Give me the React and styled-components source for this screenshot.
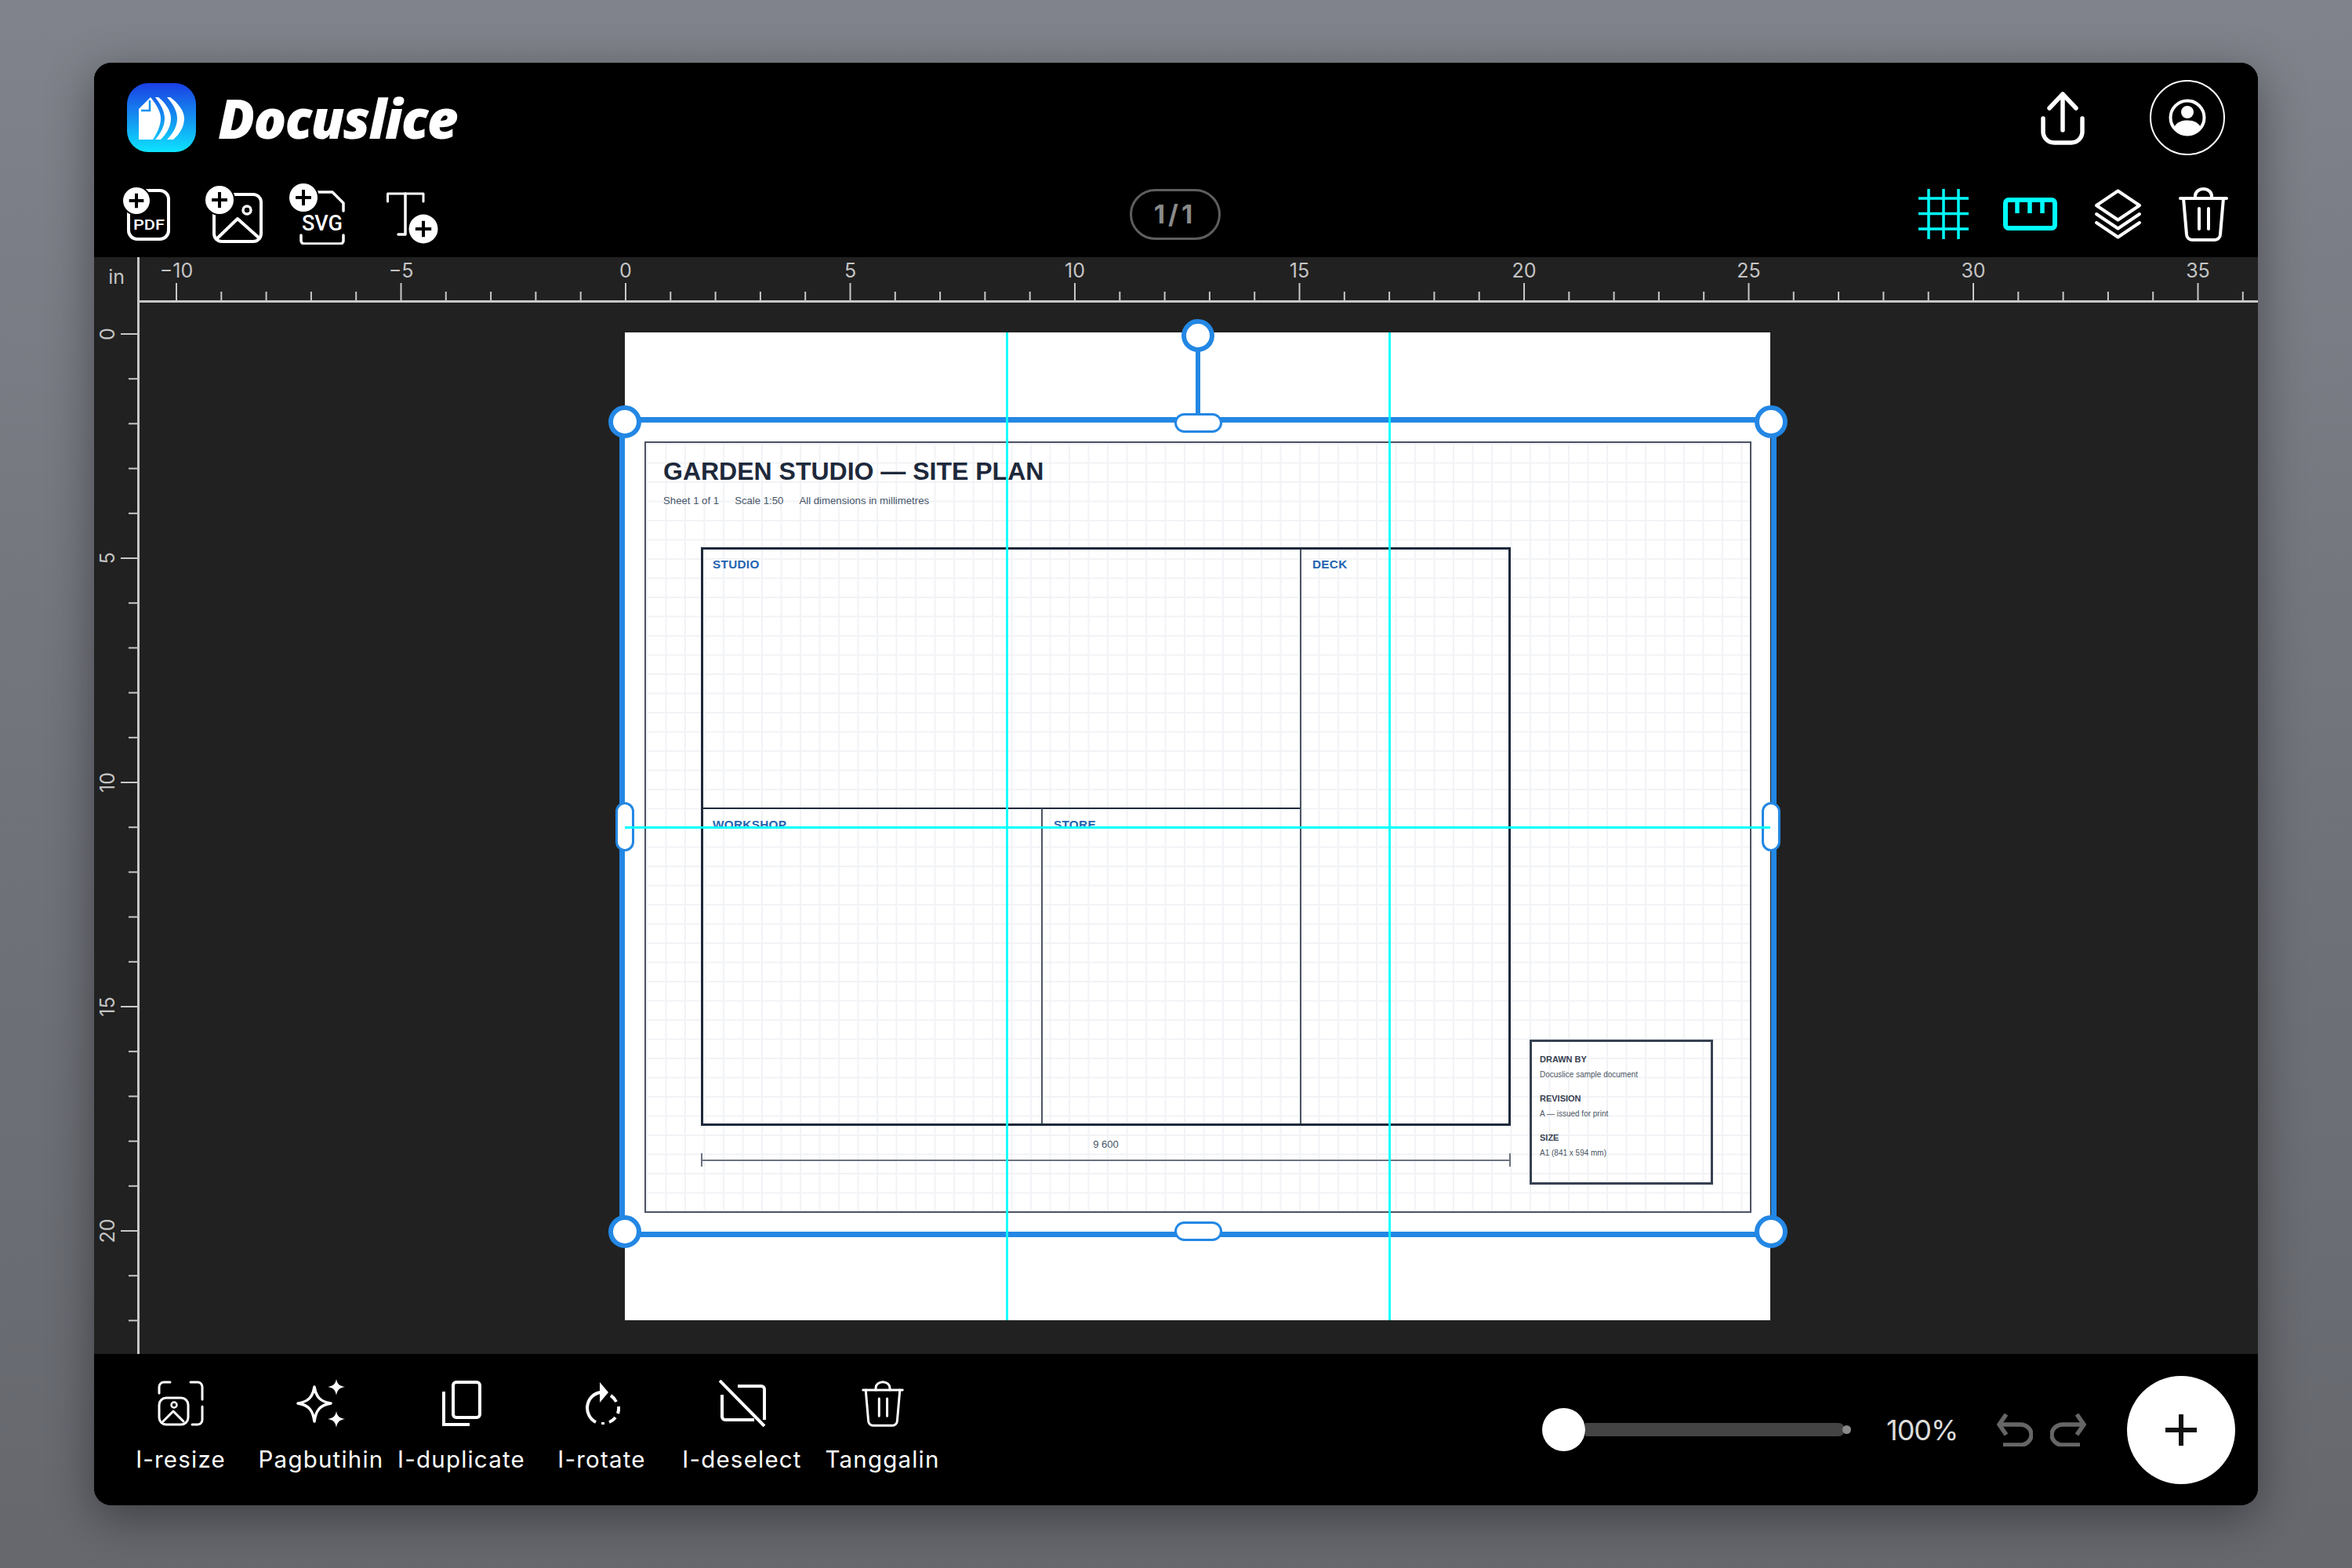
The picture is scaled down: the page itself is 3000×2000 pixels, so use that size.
import React from "react";
import styled, { createGlobalStyle } from "styled-components";

const GlobalStyle = createGlobalStyle`
  html, body {
    margin: 0;
    padding: 0;
    background: #64666e;
  }
  * {
    box-sizing: border-box;
  }
`;

const UI_FONT = `Inter, "Liberation Sans", sans-serif`;
const DOC_FONT = `"Liberation Sans", Arial, sans-serif`;
const CYAN = "#00ffff";
const BLUE = "#2387e4";
const UNIT = 57.3;

const Stage = styled.div`
  width: 3000px;
  height: 2000px;
  padding: 80px 120px;
  background: linear-gradient(180deg, #80838b 0%, #71737b 50%, #66686e 100%);
  font-family: ${UI_FONT};
`;

const Shell = styled.div`
  width: 2760px;
  height: 1840px;
  display: flex;
  flex-direction: column;
  border-radius: 22px;
  overflow: hidden;
  background: #000;
  box-shadow: 0 16px 60px rgba(0, 0, 0, 0.4);
`;

const TopBar = styled.header`
  height: 248px;
  flex: none;
  background: #000;
  padding-top: 22px;
`;

const BrandRow = styled.div`
  height: 96px;
  display: flex;
  align-items: center;
  padding: 0 42px;
`;

const Brand = styled.span`
  margin-left: 28px;
  font-family: "Open Sans", sans-serif;
  font-weight: 800;
  font-style: italic;
  font-size: 69px;
  line-height: 96px;
  letter-spacing: -1.8px;
  color: #fff;
`;

const BrandActions = styled.div`
  margin-left: auto;
  display: flex;
  align-items: center;
  gap: 83px;
`;

const Avatar = styled.div`
  width: 96px;
  height: 96px;
  border-radius: 50%;
  border: 2px solid #fff;
  display: flex;
  align-items: center;
  justify-content: center;
`;

const ToolRow = styled.div`
  height: 68px;
  margin-top: 41px;
  padding: 0 38px 0 37px;
  display: grid;
  grid-template-columns: 1fr auto 1fr;
  grid-template-rows: 68px;
  align-items: center;
`;

const AddTools = styled.div`
  display: flex;
  align-items: center;
`;

const AddSlot = styled.div`
  width: ${(p) => p.$w}px;
  display: flex;
  margin-top: ${(p) => p.$top || 0}px;
`;

const PageBadge = styled.div`
  width: 116px;
  height: 65px;
  margin-left: -2px;
  border: 3px solid #5e5e5e;
  border-radius: 33px;
  display: flex;
  align-items: center;
  justify-content: center;
  color: #8a8a8a;
  font-size: 33px;
  font-weight: 700;
  letter-spacing: 4px;
`;

const ViewTools = styled.div`
  justify-self: end;
  display: flex;
  align-items: center;
  gap: 47px;
`;

const GridSlot = styled.div`
  display: flex;
  margin-right: -3px;
`;

const Workspace = styled.main`
  flex: 1;
  min-height: 0;
  display: grid;
  grid-template-columns: 58px 1fr;
  grid-template-rows: 58px 1fr;
  background: #212121;
`;

const RulerCorner = styled.div`
  border-right: 3px solid #c8c8c8;
  color: #c4c4c4;
  font-size: 25px;
  line-height: 50px;
  text-align: right;
  padding-right: 16px;
`;

const TopRuler = styled.div`
  overflow: hidden;
  svg {
    display: block;
  }
`;

const SideRuler = styled.div`
  border-right: 3px solid #c8c8c8;
  overflow: hidden;
  svg {
    display: block;
  }
`;

const Canvas = styled.div`
  position: relative;
  overflow: hidden;
`;

const Sheet = styled.div`
  position: absolute;
  left: 619px;
  top: 38px;
  width: 1461px;
  height: 1260px;
  padding: 139px 24px 0 25px;
  background: #fff;
  font-family: ${DOC_FONT};
`;

const Frame = styled.div`
  height: 984px;
  border: 2px solid #4b5262;
  padding: 19px 0 0 22px;
  background-color: #fff;
  background-image: linear-gradient(#f1f3f6 1.5px, transparent 1.5px),
    linear-gradient(90deg, #f1f3f6 1.5px, transparent 1.5px);
  background-size: 24.5px 24.5px;
`;

const DocTitle = styled.h1`
  margin: 0;
  font-size: 32px;
  line-height: 34px;
  font-weight: 700;
  color: #1e293b;
`;

const DocMeta = styled.div`
  margin-top: 14px;
  display: flex;
  gap: 20px;
  font-size: 13.2px;
  line-height: 14px;
  color: #475569;
`;

const SheetBody = styled.div`
  margin-top: 52px;
  display: flex;
  align-items: flex-end;
`;

const PlanColumn = styled.div`
  margin-left: 48px;
  width: 1033px;
  padding-bottom: 23px;
`;

const Plan = styled.div`
  height: 738px;
  border: 3px solid #1e293b;
  display: grid;
  grid-template-columns: 431px 330px 1fr;
  grid-template-rows: 329px 1fr;
`;

const Room = styled.div`
  grid-column: ${(p) => p.$col};
  grid-row: ${(p) => p.$row};
  padding: ${(p) => (p.$top ? 12 : 11)}px 0 0 ${(p) => (p.$left ? 14 : 12)}px;
  border-left: ${(p) => (p.$left ? "2px solid #4b5563" : "none")};
  border-top: ${(p) => (p.$top ? "2px solid #1e293b" : "none")};
`;

const RoomLabel = styled.span`
  display: block;
  font-size: 15.3px;
  line-height: 16px;
  font-weight: 700;
  letter-spacing: 0.3px;
  color: #2563b0;
`;

const DimText = styled.div`
  margin-top: 17px;
  font-size: 13px;
  line-height: 14px;
  text-align: center;
  color: #475569;
`;

const DimLine = styled.div`
  margin-top: 4px;
  height: 17px;
  border-left: 2px solid #6b7280;
  border-right: 2px solid #6b7280;
  background: linear-gradient(#6b7280, #6b7280) center / 100% 2px no-repeat;
`;

const InfoBox = styled.div`
  margin-left: 24px;
  width: 234px;
  height: 185px;
  border: 3px solid #374151;
  padding: 15px 0 0 10px;
`;

const InfoHead = styled.div`
  font-size: 11px;
  line-height: 14px;
  font-weight: 700;
  color: #374151;
  margin-bottom: 6px;
`;

const InfoValue = styled.div`
  font-size: 10px;
  line-height: 14px;
  color: #4b5563;
  margin-bottom: 16px;
`;

const Selection = styled.div`
  position: absolute;
  left: -7px;
  top: 108px;
  width: 1476px;
  height: 1046px;
  border: 7px solid ${BLUE};
`;

const Corner = styled.span`
  position: absolute;
  width: 42px;
  height: 42px;
  border-radius: 50%;
  border: 6px solid ${BLUE};
  background: #fff;
  ${(p) => (p.$v === "top" ? "top: -22px;" : "bottom: -21px;")}
  ${(p) => (p.$h === "left" ? "left: -21px;" : "right: -21px;")}
`;

const RotateKnob = styled.span`
  position: absolute;
  left: 50%;
  top: -132px;
  margin-left: -21px;
  width: 42px;
  height: 42px;
  border-radius: 50%;
  border: 6px solid ${BLUE};
  background: #fff;
`;

const RotateStem = styled.span`
  position: absolute;
  left: 50%;
  top: -92px;
  margin-left: -3px;
  width: 6px;
  height: 84px;
  background: ${BLUE};
`;

const HPill = styled.span`
  position: absolute;
  left: 50%;
  margin-left: -30px;
  width: 61px;
  height: 25px;
  border-radius: 13px;
  border: 3px solid ${BLUE};
  background: #fff;
  ${(p) => (p.$side === "top" ? "top: -12px;" : "bottom: -12px;")}
`;

const VPill = styled.span`
  position: absolute;
  top: 50%;
  margin-top: -32px;
  width: 24px;
  height: 63px;
  border-radius: 13px;
  border: 3px solid ${BLUE};
  background: #fff;
  ${(p) => (p.$side === "left" ? "left: -12px;" : "right: -12px;")}
`;

const VGuide = styled.span`
  position: absolute;
  top: 0;
  bottom: 0;
  left: ${(p) => p.$at}px;
  width: 3px;
  background: ${CYAN};
  opacity: 0.9;
`;

const HGuide = styled.span`
  position: absolute;
  left: 0;
  right: 0;
  top: ${(p) => p.$at}px;
  height: 3px;
  background: ${CYAN};
`;

const BottomBar = styled.footer`
  height: 193px;
  flex: none;
  display: flex;
  align-items: center;
  padding: 0 29px 0 21px;
  background: #000;
`;

const ActionItem = styled.button`
  width: 179px;
  height: 125px;
  padding: 0;
  border: none;
  background: none;
  align-self: flex-start;
  margin-top: 32px;
  display: flex;
  flex-direction: column;
  align-items: center;
  color: #fff;
  font-family: ${UI_FONT};
`;

const ActionIcon = styled.span`
  height: 62px;
  display: flex;
  align-items: center;
`;

const ActionLabel = styled.span`
  margin-top: 22px;
  font-size: 29.5px;
  line-height: 36px;
  letter-spacing: 1.2px;
  white-space: nowrap;
`;

const BarEnd = styled.div`
  margin-left: auto;
  display: flex;
  align-items: center;
`;

const ZoomSlider = styled.div`
  display: flex;
  align-items: center;
`;

const ZoomThumb = styled.span`
  width: 55px;
  height: 55px;
  border-radius: 50%;
  background: #fff;
`;

const ZoomTrack = styled.span`
  width: 331px;
  height: 17px;
  border-radius: 0 8px 8px 0;
  background: #444;
`;

const ZoomDot = styled.span`
  width: 11px;
  height: 11px;
  margin-left: -3px;
  border-radius: 50%;
  background: #8a8a8a;
`;

const ZoomValue = styled.span`
  width: 89px;
  margin: 0 52px 0 45px;
  color: #dcdcdc;
  font-size: 36px;
  letter-spacing: -1px;
  white-space: nowrap;
`;

const History = styled.div`
  display: flex;
  align-items: center;
  gap: 22px;
`;

const AddButton = styled.button`
  width: 138px;
  height: 138px;
  margin-left: 52px;
  padding: 0;
  border: none;
  border-radius: 50%;
  background: #fff;
  display: flex;
  align-items: center;
  justify-content: center;
`;

const Svg = ({ w, h, children, ...rest }) => (
  <svg width={w} height={h} viewBox={`0 0 ${w} ${h}`} fill="none" {...rest}>
    {children}
  </svg>
);

const line = { stroke: "#fff", strokeLinecap: "round", strokeLinejoin: "round" };

const PlusBadge = ({ cx, cy, r }) => (
  <g>
    <circle cx={cx} cy={cy} r={r + 2} fill="#000" />
    <circle cx={cx} cy={cy} r={r} fill="#fff" />
    <path d={`M${cx - r * 0.55} ${cy}H${cx + r * 0.55}M${cx} ${cy - r * 0.55}V${cy + r * 0.55}`} stroke="#000" strokeWidth="4" />
  </g>
);

const LogoMark = () => (
  <Svg w={88} h={88}>
    <defs>
      <linearGradient id="logoFill" x1="0" y1="0" x2="0" y2="1">
        <stop offset="0" stopColor="#1a3fe4" />
        <stop offset="0.5" stopColor="#1490f0" />
        <stop offset="1" stopColor="#0de4ff" />
      </linearGradient>
    </defs>
    <rect width="88" height="88" rx="27" fill="url(#logoFill)" />
    <path d="M30 18 C38 28 43 37 43 45 C43 55 38 64 33 72 H15 V33 Z" fill="#fff" />
    <path d="M29 22 V35 H18" stroke="#1490f0" strokeWidth="2.5" />
    <path d="M36 18 H40 C50 26 56 36 56 45 C56 56 50 65 43 72 H36 C43 64 48 55 48 45 C48 36 43 27 36 18 Z" fill="#fff" />
    <path d="M51 18 H55 C66 26 73 36 73 45 C73 56 67 65 59 72 H51 C59 64 64 55 64 45 C64 36 59 27 51 18 Z" fill="#fff" />
  </Svg>
);

const PdfIcon = () => (
  <Svg w={60} h={68}>
    <rect x="7" y="4" width="51" height="62" rx="11" {...line} strokeWidth="4" />
    <PlusBadge cx={17} cy={17} r={17} />
    <text x="13" y="54" fill="#fff" fontFamily="Roboto, sans-serif" fontWeight="500" fontSize="19" textLength="40" lengthAdjust="spacingAndGlyphs">PDF</text>
  </Svg>
);

const ImageAddIcon = () => (
  <Svg w={73} h={73}>
    <rect x="11" y="11" width="60" height="60" rx="10" {...line} strokeWidth="4" />
    <circle cx="53" cy="31" r="5" {...line} strokeWidth="3.5" />
    <path d="M14 68 L41 42 L69 67" {...line} strokeWidth="4" />
    <PlusBadge cx={18} cy={18} r={18} />
  </Svg>
);

const SvgAddIcon = () => (
  <Svg w={71} h={78}>
    <path d="M36 11 H55 L69 25 V35" {...line} strokeWidth="3.5" />
    <path d="M15 66 V73 a4 4 0 0 0 4 4 H65 a4 4 0 0 0 4 -4 V66" {...line} strokeWidth="3.5" />
    <PlusBadge cx={18} cy={18} r={18} />
    <text x="16" y="60" fill="#fff" fontFamily="Roboto, sans-serif" fontWeight="500" fontSize="27" textLength="52" lengthAdjust="spacingAndGlyphs">SVG</text>
  </Svg>
);

const TextAddIcon = () => (
  <Svg w={66} h={66}>
    <path d="M1.5 12 V2 H47 V12" {...line} strokeWidth="3" />
    <path d="M24 2 V54 H15" {...line} strokeWidth="3.5" />
    <PlusBadge cx={47} cy={47} r={18.5} />
  </Svg>
);

const ShareIcon = () => (
  <Svg w={56} h={69}>
    <path d="M28 50 V4 M11 22 L28 4 L45 22" {...line} strokeWidth="5.5" />
    <path d="M3 35 V52 a14 14 0 0 0 14 14 H39 a14 14 0 0 0 14 -14 V35" {...line} strokeWidth="5.5" />
  </Svg>
);

const UserIcon = () => (
  <Svg w={48} h={48}>
    <circle cx="24" cy="24" r="21.5" stroke="#fff" strokeWidth="4" />
    <circle cx="24" cy="17" r="8" fill="#fff" />
    <path d="M7 36 C11 29 18 27.5 24 27.5 C30 27.5 37 29 41 36 C37 42 31 45 24 45 C17 45 11 42 7 36Z" fill="#fff" />
  </Svg>
);

const GridIcon = () => (
  <Svg w={64} h={64}>
    <path d="M0 12H64M0 31.5H64M0 51H64M13 0V64M32 0V64M51 0V64" stroke={CYAN} strokeWidth="3.5" />
  </Svg>
);

const RulerIcon = () => (
  <Svg w={69} h={42}>
    <rect x="3" y="3" width="63" height="36" rx="4" stroke={CYAN} strokeWidth="6" />
    <path d="M18 3V20M34 3V20M50 3V20" stroke={CYAN} strokeWidth="5.5" />
  </Svg>
);

const LayersIcon = () => (
  <Svg w={61} h={64}>
    <path d="M30.5 2.5 L58 21 L30.5 39.5 L3 21 Z" {...line} strokeWidth="4" />
    <path d="M3 32 L30.5 50.5 L58 32" {...line} strokeWidth="4" />
    <path d="M3 43 L30.5 61.5 L58 43" {...line} strokeWidth="4" />
  </Svg>
);

const TrashIcon = ({ w = 63, h = 69, sw = 4 }) => (
  <svg width={w} height={h} viewBox="0 0 63 69" fill="none">
    <path d="M2 14 H61" {...line} strokeWidth={sw} />
    <path d="M21 14 V11 a10.5 9 0 0 1 21 0 V14" {...line} strokeWidth={sw} />
    <path d="M6 14 L10 60 a7 7 0 0 0 7 7 H46 a7 7 0 0 0 7 -7 L57 14" {...line} strokeWidth={sw} />
    <path d="M26 27 V53 M38 27 V53" {...line} strokeWidth={sw} />
  </svg>
);

const ResizeIcon = () => (
  <Svg w={59} h={58}>
    <path d="M2 16 V8 a6 6 0 0 1 6 -6 H16 M42 2 H51 a6 6 0 0 1 6 6 V24 M57 33 V50 a6 6 0 0 1 -6 6 H44" {...line} strokeWidth="3" />
    <rect x="2" y="22" width="37" height="34" rx="9" {...line} strokeWidth="3" />
    <circle cx="21" cy="31" r="3.5" {...line} strokeWidth="2.5" />
    <path d="M7 52 L20 39 L33 52" {...line} strokeWidth="3" />
  </Svg>
);

const SparkleIcon = () => (
  <Svg w={63} h={62}>
    <path d="M23 10 C25 23 31 29 44 31 C31 33 25 39 23 54 C21 39 15 33 2 31 C15 29 21 23 23 10Z" stroke="#fff" strokeWidth="3.5" strokeLinejoin="round" />
    <path d="M51 0 C52 6 55 9 62 10 C55 11 52 14 51 21 C50 14 47 11 40 10 C47 9 50 6 51 0Z" fill="#fff" />
    <path d="M51 41 C52 47 55 50 62 51 C55 52 52 55 51 62 C50 55 47 52 40 51 C47 50 50 47 51 41Z" fill="#fff" />
  </Svg>
);

const DuplicateIcon = () => (
  <Svg w={50} h={58}>
    <rect x="14" y="2" width="34" height="45" rx="4" stroke="#fff" strokeWidth="4" />
    <path d="M2 14 V56 H35" stroke="#fff" strokeWidth="4" />
  </Svg>
);

const RotateIcon = () => (
  <Svg w={46} h={54}>
    <path d="M21 13 A19 20 0 0 0 15 51" stroke="#fff" strokeWidth="4" />
    <path d="M20 0 L31 13 L20 26 Z" fill="#fff" />
    <path d="M34 17 A19 20 0 0 1 41 25 M44 31 A19 20 0 0 1 43 40 M40 45 A19 20 0 0 1 32 51 M26 53 L22 53" stroke="#fff" strokeWidth="4" />
  </Svg>
);

const DeselectIcon = () => (
  <Svg w={60} h={60}>
    <path d="M24 8 H54 a4 4 0 0 1 4 4 V51 M4 19 V47 a4 4 0 0 0 4 4 H45" stroke="#fff" strokeWidth="4" />
    <path d="M1 1 L58 59" stroke="#fff" strokeWidth="4" />
  </Svg>
);

const UndoIcon = ({ flip }) => (
  <Svg w={46} h={42} style={flip ? { transform: "scaleX(-1)" } : undefined}>
    <path d="M12 1 L3 14 L12 27" stroke="#666" strokeWidth="5.5" />
    <path d="M3 14 H30 a14 13 0 0 1 0 26 H8" stroke="#666" strokeWidth="5.5" />
  </Svg>
);

const PlusIcon = () => (
  <Svg w={40} h={40}>
    <path d="M0 20H40M20 0V40" stroke="#111" strokeWidth="6" />
  </Svg>
);

const range = (from, to) => Array.from({ length: to - from + 1 }, (_, i) => from + i);
const rulerInk = "#c8c8c8";

const HorizontalRuler = () => (
  <svg width="2702" height="58">
    <rect x="0" y="55" width="2702" height="3" fill={rulerInk} />
    {range(-10, 36).map((n) => {
      const x = 620 + n * UNIT;
      const major = n % 5 === 0;
      return (
        <g key={n}>
          <rect x={x - 1} y={major ? 33 : 44} width="2" height={major ? 22 : 11} fill={rulerInk} />
          {major && (
            <text x={x} y="26" textAnchor="middle" fontFamily="Inter, sans-serif" fontSize="25" fill="#c4c4c4">
              {n < 0 ? `\u2212${-n}` : n}
            </text>
          )}
        </g>
      );
    })}
  </svg>
);

const VerticalRuler = () => (
  <svg width="55" height="1341">
    {range(0, 22).map((n) => {
      const y = 40 + n * 57.2;
      const major = n % 5 === 0;
      return (
        <g key={n}>
          <rect x={major ? 34 : 44} y={y - 1} width={major ? 21 : 11} height="2" fill={rulerInk} />
          {major && (
            <text
              x="26"
              y={y}
              transform={`rotate(-90 26 ${y})`}
              textAnchor="middle"
              fontFamily="Inter, sans-serif"
              fontSize="25"
              fill="#c4c4c4"
            >
              {n}
            </text>
          )}
        </g>
      );
    })}
  </svg>
);

const actions = [
  { label: "I-resize", icon: <ResizeIcon /> },
  { label: "Pagbutihin", icon: <SparkleIcon /> },
  { label: "I-duplicate", icon: <DuplicateIcon /> },
  { label: "I-rotate", icon: <RotateIcon /> },
  { label: "I-deselect", icon: <DeselectIcon /> },
  { label: "Tanggalin", icon: <TrashIcon w={54} h={59} sw={3.5} /> },
];

const info = [
  ["DRAWN BY", "Docuslice sample document"],
  ["REVISION", "A \u2014 issued for print"],
  ["SIZE", "A1 (841 x 594 mm)"],
];

export default function App() {
  return (
    <>
      <GlobalStyle />
      <Stage>
        <Shell>
          <TopBar>
            <BrandRow>
              <LogoMark />
              <Brand>Docuslice</Brand>
              <BrandActions>
                <ShareIcon />
                <Avatar>
                  <UserIcon />
                </Avatar>
              </BrandActions>
            </BrandRow>
            <ToolRow>
              <AddTools>
                <AddSlot $w={105}><PdfIcon /></AddSlot>
                <AddSlot $w={107}><ImageAddIcon /></AddSlot>
                <AddSlot $w={124}><SvgAddIcon /></AddSlot>
                <AddSlot $w={66} $top={10}><TextAddIcon /></AddSlot>
              </AddTools>
              <PageBadge>1/1</PageBadge>
              <ViewTools>
                <GridSlot><GridIcon /></GridSlot>
                <RulerIcon />
                <LayersIcon />
                <TrashIcon />
              </ViewTools>
            </ToolRow>
          </TopBar>

          <Workspace>
            <RulerCorner>in</RulerCorner>
            <TopRuler>
              <HorizontalRuler />
            </TopRuler>
            <SideRuler>
              <VerticalRuler />
            </SideRuler>
            <Canvas>
              <Sheet>
                <Frame>
                  <DocTitle>GARDEN STUDIO — SITE PLAN</DocTitle>
                  <DocMeta>
                    <span>Sheet 1 of 1</span>
                    <span>Scale 1:50</span>
                    <span>All dimensions in millimetres</span>
                  </DocMeta>
                  <SheetBody>
                    <PlanColumn>
                      <Plan>
                        <Room $col="1 / 3" $row="1"><RoomLabel>STUDIO</RoomLabel></Room>
                        <Room $col="3" $row="1 / 3" $left><RoomLabel>DECK</RoomLabel></Room>
                        <Room $col="1" $row="2" $top><RoomLabel>WORKSHOP</RoomLabel></Room>
                        <Room $col="2" $row="2" $top $left><RoomLabel>STORE</RoomLabel></Room>
                      </Plan>
                      <DimText>9 600</DimText>
                      <DimLine />
                    </PlanColumn>
                    <InfoBox>
                      {info.map(([head, value]) => (
                        <div key={head}>
                          <InfoHead>{head}</InfoHead>
                          <InfoValue>{value}</InfoValue>
                        </div>
                      ))}
                    </InfoBox>
                  </SheetBody>
                </Frame>
                <Selection>
                  <RotateStem />
                  <RotateKnob />
                  <Corner $v="top" $h="left" />
                  <Corner $v="top" $h="right" />
                  <Corner $v="bottom" $h="left" />
                  <Corner $v="bottom" $h="right" />
                  <HPill $side="top" />
                  <HPill $side="bottom" />
                  <VPill $side="left" />
                  <VPill $side="right" />
                </Selection>
                <VGuide $at={486} />
                <VGuide $at={974} />
                <HGuide $at={630} />
              </Sheet>
            </Canvas>
          </Workspace>

          <BottomBar>
            {actions.map((a) => (
              <ActionItem key={a.label}>
                <ActionIcon>{a.icon}</ActionIcon>
                <ActionLabel>{a.label}</ActionLabel>
              </ActionItem>
            ))}
            <BarEnd>
              <ZoomSlider>
                <ZoomThumb />
                <ZoomTrack />
                <ZoomDot />
              </ZoomSlider>
              <ZoomValue>100%</ZoomValue>
              <History>
                <UndoIcon />
                <UndoIcon flip />
              </History>
              <AddButton>
                <PlusIcon />
              </AddButton>
            </BarEnd>
          </BottomBar>
        </Shell>
      </Stage>
    </>
  );
}
